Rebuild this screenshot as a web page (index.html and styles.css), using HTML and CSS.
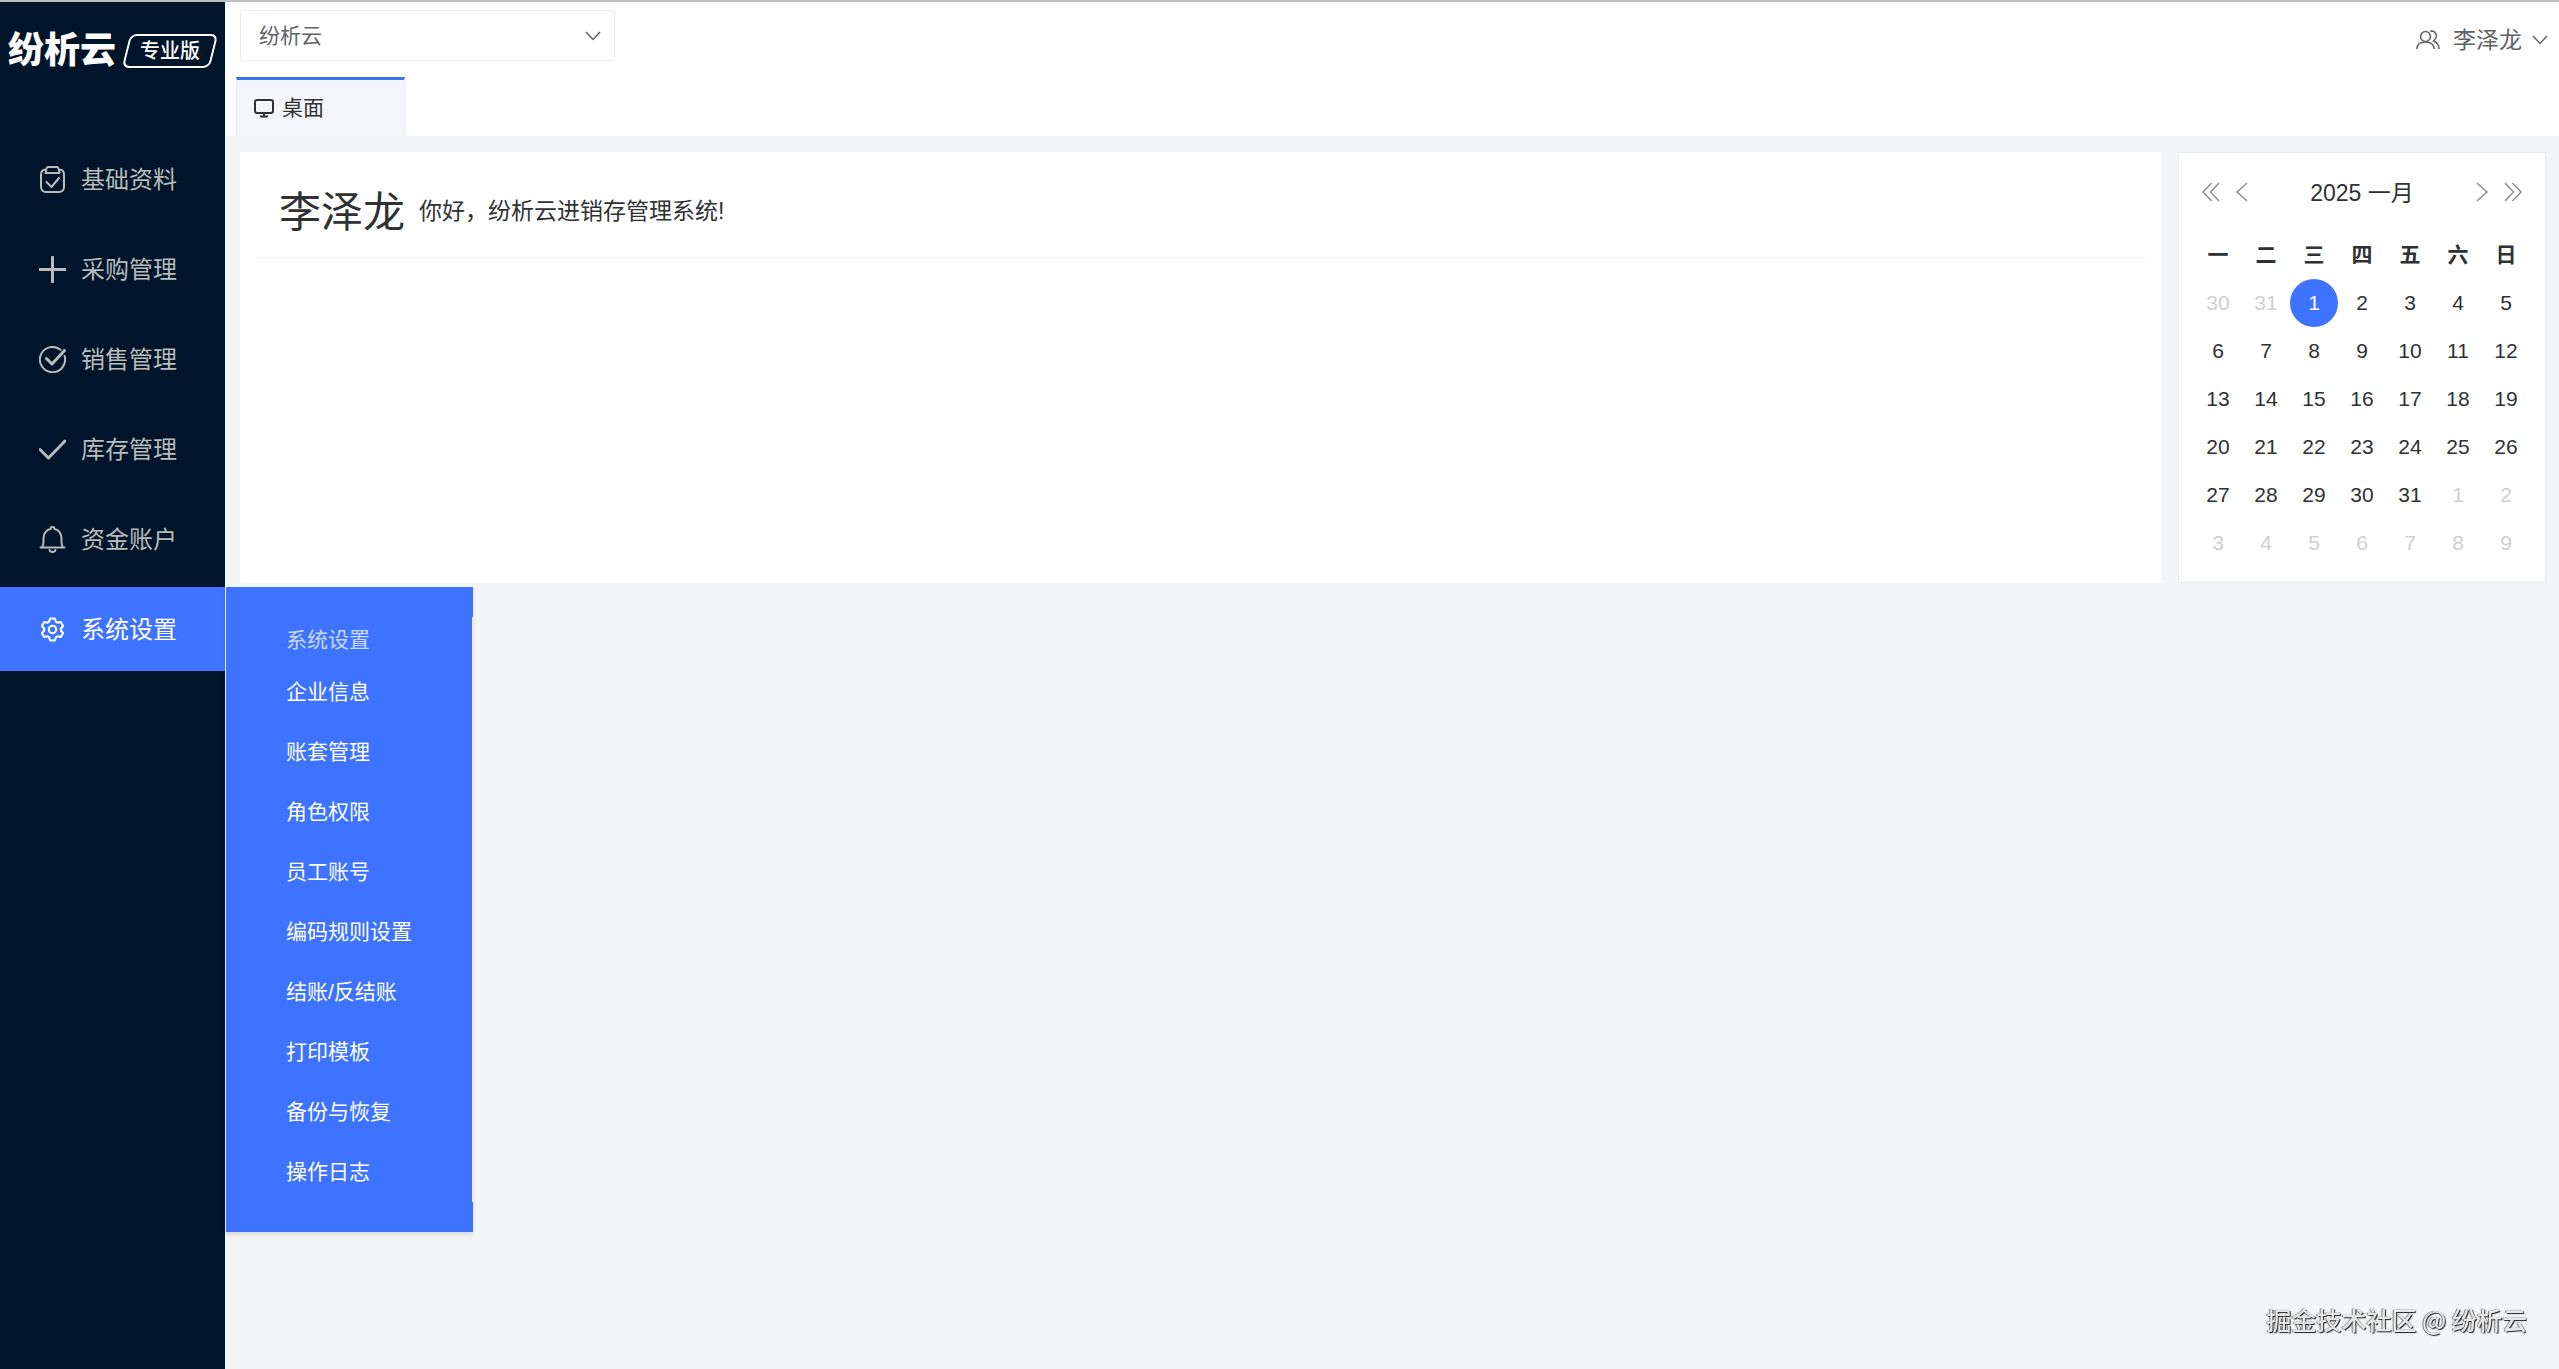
FILE: index.html
```html
<!DOCTYPE html>
<html lang="zh-CN">
	<head>
		<title>纷析云</title>
		<meta charset="UTF-8"/>
		<meta name="viewport" content="width=device-width, initial-scale=1"/>
		<link rel="stylesheet" href="styles.css">
	</head>
	<body>
		<aside class="sidebar">
			<div class="logo">
				<span class="logo-name">纷析云</span>
				<span class="logo-badge"><span>专业版</span></span>
			</div>
			<ul class="menu">
				<li class="menu-item">
					<a href="#base">
						<svg class="icon" viewBox="0 0 27 27"><path d="M7 3.5C4 3.5 2 5.500 2 8.500V20.500Q2 26 7 26H20Q25 26 25 20.500V8.500C25 5.500 23 3.500 20 3.500M9 1H18Q19 1 19.500 2.500L20.500 7H6.500L7.500 2.500Q8 1 9 1ZM7.500 16L12.500 21L20 12"/></svg>
						<span>基础资料</span>
					</a>
				</li>
				<li class="menu-item">
					<a href="#purchase">
						<svg class="icon icon-bold" viewBox="0 0 27 27"><path d="M13.500 1V26M1 13.500H26"/></svg>
						<span>采购管理</span>
					</a>
				</li>
				<li class="menu-item">
					<a href="#sales">
						<svg class="icon" viewBox="0 0 27 27"><path d="M21.500 3.800A12.600 12.600 0 1 0 25.600 10"/><path class="thick" d="M7.500 12.500L13 18L25.500 4.500"/></svg>
						<span>销售管理</span>
					</a>
				</li>
				<li class="menu-item">
					<a href="#stock">
						<svg class="icon icon-bold" viewBox="0 0 27 27"><path d="M1 13.500L9.500 22L26 5"/></svg>
						<span>库存管理</span>
					</a>
				</li>
				<li class="menu-item">
					<a href="#fund">
						<svg class="icon" viewBox="0 0 27 27"><path d="M1.500 21.500H25.500M3 21.500Q4.500 19 4.500 16V12C4.500 7 8 3.500 11.500 3Q11.500 1 13.500 1T15.500 3C19 3.500 22.500 7 22.500 12V16Q22.500 19 24 21.500M10.500 24Q11 26 13.500 26T16.500 24"/></svg>
						<span>资金账户</span>
					</a>
				</li>
				<li class="menu-item active">
					<a href="#setting">
						<svg class="icon icon-gear" viewBox="0 0 1024 1024"><path d="M600.700 96L640 220Q670 232 700 254L826 226L914 380L828 476Q832 512 828 548L914 644L826 798L700 770Q670 792 640 804L600.700 928H423.300L384 804Q354 792 324 770L198 798L110 644L196 548Q192 512 196 476L110 380L198 226L324 254Q354 232 384 220L423.300 96Z"/><circle cx="512" cy="512" r="140"/></svg>
						<span>系统设置</span>
					</a>
					<div class="submenu">
						<ul>
							<li class="submenu-title">系统设置</li>
							<li><a href="#company">企业信息</a></li>
							<li><a href="#accountset">账套管理</a></li>
							<li><a href="#role">角色权限</a></li>
							<li><a href="#staff">员工账号</a></li>
							<li><a href="#coderule">编码规则设置</a></li>
							<li><a href="#checkout">结账/反结账</a></li>
							<li><a href="#print">打印模板</a></li>
							<li><a href="#backup">备份与恢复</a></li>
							<li><a href="#log">操作日志</a></li>
						</ul>
					</div>
				</li>
			</ul>
		</aside>

		<div class="page">
			<header class="header">
				<div class="header-top">
					<div class="select">
						<select id="company" aria-label="账套">
							<option>纷析云</option>
						</select>
						<svg class="arrow" viewBox="0 0 16 10"><path d="M1 1L8 8.500L15 1"/></svg>
					</div>
					<button type="button" class="user">
						<svg class="user-icon" viewBox="0 0 24 20"><circle cx="9.500" cy="6.500" r="5"/><path d="M1 19Q1 12 9.500 12T18 19M14 1C18 .5 20.500 3 20.500 6S18 10 17.500 11Q23 13 23 19"/></svg>
						<span>李泽龙</span>
						<svg class="arrow" viewBox="0 0 16 10"><path d="M1 1L8 8.500L15 1"/></svg>
					</button>
				</div>
				<nav class="tabs">
					<a class="tab" href="#desktop">
						<svg class="tab-icon" viewBox="0 0 20 20"><path d="M3 2H17Q19 2 19 4V13Q19 15 17 15H3Q1 15 1 13V4Q1 2 3 2ZM10 15V18M6 18.500H14"/></svg>
						<span>桌面</span>
					</a>
				</nav>
			</header>

			<main class="content">
				<section class="welcome">
					<div class="welcome-head">
						<h1>李泽龙</h1>
						<span>你好，纷析云进销存管理系统!</span>
					</div>
				</section>

				<section class="calendar">
					<div class="calendar-head">
						<button type="button" aria-label="上一年"><svg viewBox="0 0 20 20"><path d="M10.500 1L2 10L10.500 19M18 1L9.500 10L18 19"/></svg></button>
						<button type="button" aria-label="上个月"><svg viewBox="0 0 20 20"><path d="M15 1L5 10L15 19"/></svg></button>
						<span class="calendar-title">2025 一月</span>
						<button type="button" aria-label="下个月"><svg viewBox="0 0 20 20"><path d="M5 1L15 10L5 19"/></svg></button>
						<button type="button" aria-label="下一年"><svg viewBox="0 0 20 20"><path d="M2 1L10.500 10L2 19M9.500 1L18 10L9.500 19"/></svg></button>
					</div>
					<table>
						<thead>
							<tr><th>一</th><th>二</th><th>三</th><th>四</th><th>五</th><th>六</th><th>日</th></tr>
						</thead>
						<tbody>
							<tr><td class="other">30</td><td class="other">31</td><td class="today"><span>1</span></td><td>2</td><td>3</td><td>4</td><td>5</td></tr>
							<tr><td>6</td><td>7</td><td>8</td><td>9</td><td>10</td><td>11</td><td>12</td></tr>
							<tr><td>13</td><td>14</td><td>15</td><td>16</td><td>17</td><td>18</td><td>19</td></tr>
							<tr><td>20</td><td>21</td><td>22</td><td>23</td><td>24</td><td>25</td><td>26</td></tr>
							<tr><td>27</td><td>28</td><td>29</td><td>30</td><td>31</td><td class="other">1</td><td class="other">2</td></tr>
							<tr><td class="other">3</td><td class="other">4</td><td class="other">5</td><td class="other">6</td><td class="other">7</td><td class="other">8</td><td class="other">9</td></tr>
						</tbody>
					</table>
				</section>
			</main>
		</div>

		<div class="watermark">掘金技术社区 @ 纷析云</div>
	</body>
</html>
```

FILE: styles.css
```css
* {
	box-sizing: border-box;
}

body {
	display: flex;
	min-height: 100vh;
	margin: 0;
	border-top: 2px solid #bfbfbf;
	background-color: #f3f5f7;
	color: #303133;
	font-family: "Liberation Sans", "Noto Sans CJK SC", sans-serif;
	font-size: 21px;
}

ul {
	margin: 0;
	padding: 0;
	list-style: none;
}

a {
	color: inherit;
	text-decoration: none;
}

button {
	padding: 0;
	border: 0;
	background: none;
	color: inherit;
	font: inherit;
	cursor: pointer;
}

svg {
	display: block;
	flex: none;
	fill: none;
	stroke: currentColor;
	stroke-width: 1.5;
}

/* sidebar */
.sidebar {
	flex: none;
	width: 225px;
	background-color: #001529;
	color: #b9bbbd;
}

.logo {
	display: flex;
	align-items: center;
	gap: 10px;
	height: 98px;
	padding-left: 8px;
	color: #fff;
}

.logo-name {
	font-size: 36px;
	font-weight: 900;
	line-height: 36px;
}

.logo-badge {
	width: 88px;
	height: 34px;
	border: 2px solid #fff;
	border-radius: 7px;
	transform: skewX(-14deg);
	font-size: 20px;
	font-weight: 500;
	line-height: 30px;
	text-align: center;
}

/* the frame is slanted, the words are not */
.logo-badge span {
	display: block;
	transform: skewX(14deg);
}

.menu {
	display: flex;
	flex-direction: column;
	gap: 6px;
	margin-top: 37px;
}

.menu-item {
	position: relative;
}

.menu-item > a {
	display: flex;
	align-items: center;
	gap: 15px;
	height: 84px;
	padding-left: 39px;
	font-size: 24px;
}

/* the chinese glyphs sit low in their line box */
.menu-item > a span,
.tab span,
.user span {
	padding-bottom: 4px;
}

.menu-item.active > a {
	background-color: #3d73ff;
	color: #fff;
}

.icon {
	width: 27px;
	height: 27px;
	stroke-linejoin: round;
	stroke-linecap: round;
	stroke-width: 2;
}

.icon-bold,
.thick {
	stroke-width: 3;
}

.icon-gear {
	stroke-width: 80;
}

.submenu {
	position: absolute;
	top: 0;
	left: 226px;
	z-index: 10;
	width: 247px;
	padding: 30px 0;
	background-color: #3d73ff;
	box-shadow: 0 3px 4px rgba(0, 0, 0, .1);
	color: #fff;
}

.submenu ul {
	border-right: 1px solid #eceef1;
}

.submenu li {
	padding-left: 60px;
	line-height: 60px;
}

.submenu a {
	display: block;
}

.submenu .submenu-title {
	color: #c9d7fb;
	line-height: 45px;
}

/* header */
.page {
	flex: 1;
	min-width: 0;
}

.header {
	background-color: #fff;
}

.header-top {
	display: flex;
	align-items: center;
	justify-content: space-between;
	height: 75px;
	padding: 0 11px 8px 15px;
	color: #606266;
}

.select {
	display: flex;
	align-items: center;
	width: 375px;
	height: 51px;
	border: 1px solid #ebedf0;
	border-radius: 3px;
}

.select select {
	flex: 1;
	height: 100%;
	margin-right: -30px;
	padding: 0 30px 0 18px;
	border: 0;
	background: none;
	appearance: none;
	color: inherit;
	font: inherit;
}

.arrow {
	width: 16px;
	height: 10px;
}

.select .arrow {
	margin-right: 13px;
	pointer-events: none;
}

.user {
	display: flex;
	align-items: center;
	gap: 10px;
	margin-top: 8px;
	font-size: 23px;
}

.user-icon {
	width: 24px;
	height: 20px;
	margin-right: 3px;
}

.tabs {
	display: flex;
	padding-left: 11px;
}

.tab {
	display: flex;
	align-items: center;
	gap: 8px;
	width: 169px;
	height: 59px;
	padding-left: 17px;
	border: 1px solid #e4e7ed;
	border-top: 3px solid #3f70ee;
	border-bottom: 0;
	background-color: #f5f6fa;
}

.tab-icon {
	width: 20px;
	height: 20px;
	stroke-width: 2;
}

/* content */
.content {
	display: flex;
	gap: 16px;
	padding: 16px 13px 16px 15px;
}

.welcome {
	flex: 1;
	padding: 0 15px;
	background-color: #fff;
}

.welcome-head {
	display: flex;
	align-items: center;
	gap: 14px;
	height: 106px;
	padding: 16px 24px 0;
	border-bottom: 1px solid #f0f1f3;
	font-size: 23px;
}

.welcome-head h1 {
	margin: 0;
	font-size: 42px;
	font-weight: 400;
	line-height: 60px;
}

.welcome-head span {
	padding-bottom: 8px;
}

.calendar {
	flex: none;
	width: 368px;
	padding: 15px;
	border: 1px solid #e8eaee;
	background-color: #fff;
}

.calendar-head {
	display: flex;
	align-items: center;
	gap: 11px;
	height: 48px;
	margin-bottom: 15px;
	padding: 0 7px;
	color: #8e8e8e;
}

.calendar-head svg {
	width: 20px;
	height: 20px;
}

.calendar-title {
	flex: 1;
	padding-bottom: 2px;
	color: #303133;
	font-size: 23px;
	text-align: center;
}

.calendar table {
	width: 100%;
	border-collapse: collapse;
	table-layout: fixed;
}

.calendar th,
.calendar td {
	height: 48px;
	padding: 0;
	line-height: 48px;
	text-align: center;
}

.calendar .other {
	color: #cfcfcf;
}

.today span {
	display: block;
	border-radius: 50%;
	background-color: #3d73ff;
	color: #fff;
}

.watermark {
	position: fixed;
	right: 32px;
	bottom: 32px;
	color: #e6e6e6;
	font-family: "Noto Sans CJK SC", sans-serif;
	font-size: 25px;
	font-weight: 500;
	line-height: 36px;
	text-shadow: 1px 1px 1px #222, -1px 0 1px #777;
}
```
